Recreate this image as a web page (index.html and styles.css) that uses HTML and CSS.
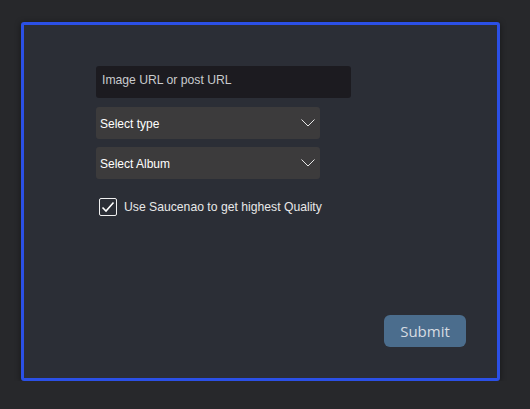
FILE: index.html
```html
<!DOCTYPE html>
<html>
<head>
<meta charset="utf-8">
<link rel="stylesheet" href="styles.css">
</head>
<body>
<div class="card">
  <div class="url-input">Image URL or post URL</div>
  <div class="select first">
    <span>Select type</span>
    <svg class="chev" width="14" height="8" viewBox="0 0 14 8"><polyline points="0.5,0.5 7,7 13.5,0.5" fill="none" stroke="#e6e6e6" stroke-width="1"/></svg>
  </div>
  <div class="select">
    <span>Select Album</span>
    <svg class="chev" width="14" height="8" viewBox="0 0 14 8"><polyline points="0.5,0.5 7,7 13.5,0.5" fill="none" stroke="#e6e6e6" stroke-width="1"/></svg>
  </div>
  <label class="check-row">
    <span class="box"><svg width="14" height="12" viewBox="0 0 14 12"><polyline points="1.5,6.5 5,10 12.5,1.5" fill="none" stroke="#ffffff" stroke-width="1.6"/></svg></span>
    <span class="check-label">Use Saucenao to get highest Quality</span>
  </label>
  <div class="submit">Submit</div>
</div>
</body>
</html>
```
FILE: styles.css
```css
html, body {
  margin: 0;
  padding: 0;
  background: #27282b;
}
body {
  padding: 22px 0 0 21px;
  font-family: "Liberation Sans", Arial, sans-serif;
}
.card {
  box-sizing: border-box;
  width: 479px;
  height: 359px;
  border: 3px solid #2b50e6;
  border-radius: 3px;
  background: #2b2e36;
  box-shadow: 0 1px 6px rgba(0,0,0,0.45);
  padding: 41px 31px 31px 72px;
  display: flex;
  flex-direction: column;
  align-items: flex-start;
}
.url-input {
  box-sizing: border-box;
  width: 255px;
  height: 32px;
  background: #1c1b20;
  border-radius: 3px;
  color: #c9cbce;
  font-size: 12.2px;
  padding: 0 0 0 6px;
  display: flex;
  align-items: center;
  padding-bottom: 4px;
}
.select {
  box-sizing: border-box;
  width: 224px;
  height: 32px;
  background: #3c3b3c;
  border-radius: 3px;
  color: #ffffff;
  font-size: 12px;
  padding: 0 5px 0 4px;
  display: flex;
  align-items: center;
  justify-content: space-between;
  margin-top: 8px;
}
.select.first {
  margin-top: 9px;
}
.select span {
  padding-top: 2px;
}
.chev {
  display: block;
  margin-bottom: 1px;
}
.check-row {
  display: flex;
  align-items: center;
  margin-top: 19px;
  margin-left: 3px;
}
.box {
  box-sizing: border-box;
  width: 18px;
  height: 18px;
  border: 1.5px solid #f0f0f0;
  border-radius: 2px;
  display: flex;
  align-items: center;
  justify-content: center;
}
.check-label {
  color: #e8e8e8;
  font-size: 12.2px;
  margin-left: 7px;
}
.submit {
  margin-top: auto;
  align-self: flex-end;
  box-sizing: border-box;
  width: 82px;
  height: 32px;
  background: #4b6d8d;
  border-radius: 6px;
  color: #d6dce2;
  font-family: "Open Sans", sans-serif;
  font-size: 15px;
  display: flex;
  align-items: center;
  justify-content: center;
}
```
